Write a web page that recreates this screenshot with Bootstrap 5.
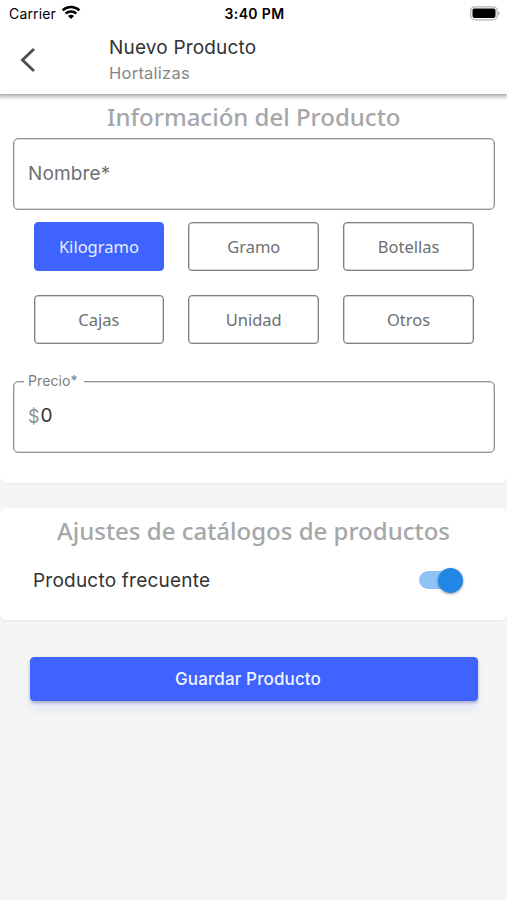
<!DOCTYPE html>
<html lang="es">
<head>
<meta charset="utf-8">
<meta name="viewport" content="width=device-width, initial-scale=1">
<title>Nuevo Producto</title>
<link href="https://cdn.jsdelivr.net/npm/bootstrap@5.3.0/dist/css/bootstrap.min.css" rel="stylesheet">
<style>
body{font-family:Inter,"Liberation Sans",sans-serif;background:#f5f5f5;color:#333;min-height:900px;overflow:hidden}
.top-area{height:94px;box-shadow:0 1px 5px 1px rgba(0,0,0,.42);z-index:2}
.status{height:28px;color:#000;display:grid;grid-template-columns:1fr auto 1fr;padding:0 7px 0 9px}
.carrier{font-size:14px;line-height:27px;letter-spacing:.15px;margin-top:-2px}
.wifi{margin:-3px 0 0 5px}
.battery{margin-top:-2px}
.clock{font-size:14px;line-height:27px;font-weight:600;letter-spacing:.35px}
.app-bar{height:66px;padding:6px 0 0 20px}
.back{margin-right:71px;margin-top:-8px}
.app-title{font-size:19px;line-height:28px;letter-spacing:.18px}
.app-sub{font-size:16.5px;line-height:23px;letter-spacing:.25px;color:#868686}
.panel{border-radius:6px;box-shadow:0 1px 2px rgba(0,0,0,.06)}
.panel-product{height:389px;padding:5px 12.5px 0 13px}
.panel-settings{height:112px;margin-top:25px;padding:5px 33px 0}
.section-title{font-family:"Noto Sans","Open Sans",sans-serif;font-weight:500;font-size:24px;line-height:36px;color:#a5a7a9;white-space:nowrap;text-align:center;margin:0}
.field{height:72px;border:1px solid #929292;box-shadow:inset 0 0 0 .5px #b5b5b5;border-radius:5px;padding:0 14px;font-size:19px}
.field-name{margin-top:3px;color:#707070;letter-spacing:.15px}
.field-price{margin-top:37px;padding-bottom:1px}
.currency{color:#8e8e8e;font-size:18px;margin-right:1px}
.float-label{left:10px;top:-10px;padding:0 6px 0 4px;background:#fff;color:#7d7d7d;font-size:14px;line-height:18px;letter-spacing:.1px}
.units{display:grid;grid-template-columns:repeat(3,1fr);gap:24px;padding:0 20.5px 0 20.5px;margin-top:12px}
.unit{--bs-btn-padding-y:0;--bs-btn-padding-x:0;--bs-btn-color:#6d7072;--bs-btn-border-color:#7d8080;--bs-btn-border-radius:4px;height:49px;font-family:"Noto Sans","Open Sans",sans-serif;font-size:16.5px;line-height:46px;box-shadow:inset 0 0 0 .5px #a5a8a8}
.unit.chosen{--bs-btn-bg:#3e63ff;--bs-btn-color:#e8edff;--bs-btn-border-color:#3e63ff;box-shadow:none}
.frequent{font-size:19px;line-height:28px;letter-spacing:.22px;height:62px}
.frequent-label{padding-top:2px}
.toggle-track{width:42px;height:18px;border-radius:9px;background:#8fc3f5;margin-right:13px}
.toggle-thumb{width:25px;height:25px;border-radius:50%;background:#2286e7;box-shadow:0 1px 3px rgba(0,0,0,.4);top:-3.5px;right:-2px}
.save{--bs-btn-bg:#3e63ff;--bs-btn-color:#f1f4ff;--bs-btn-border-color:#3e63ff;--bs-btn-border-radius:4px;width:448px;height:44px;margin:37px 0 0 30px;padding:2px 12px 0 0;font-size:17px;font-weight:500;letter-spacing:.13px;box-shadow:0 2px 3px rgba(60,70,130,.35),0 9px 8px rgba(62,99,255,.09)}
</style>
<script src="https://cdn.jsdelivr.net/npm/bootstrap@5.3.0/dist/js/bootstrap.bundle.min.js"></script>
</head>
<body>
<header class="top-area bg-white position-relative">
  <div class="status">
    <div class="d-flex align-items-center">
      <span class="carrier">Carrier</span>
      <svg class="wifi" width="20" height="15" viewBox="0 0 20 15" fill="none" stroke="#000" stroke-width="2.5" aria-hidden="true"><path d="M1.6 5.3C6.3.8 13.7.8 18.4 5.3M4.7 8.5c3-2.8 7.6-2.8 10.6 0"/><path d="M7 10.9c1.7-1.6 4.3-1.6 6 0l-3 3z" fill="#000" stroke="none"/></svg>
    </div>
    <span class="clock">3:40 PM</span>
    <div class="d-flex align-items-center justify-content-end">
      <svg class="battery" width="30" height="15" viewBox="0 0 30 15" aria-hidden="true"><rect x=".7" y=".8" width="26.5" height="13" rx="4" fill="#fff" stroke="#b4b4b4" stroke-width="1.3"/><rect x="2.5" y="2.6" width="23" height="9.4" rx="2" fill="#000"/><path d="M28.4 5.2c1.8.8 1.8 3.4 0 4.2z" fill="#a5a5a5"/></svg>
    </div>
  </div>
  <nav class="app-bar d-flex align-items-start">
    <svg class="back align-self-center" width="18" height="26" viewBox="0 0 18 26" fill="none" stroke="#4b5054" stroke-width="2.9" aria-hidden="true"><path d="M14 2 2.5 13 14 24"/></svg>
    <div>
      <div class="app-title">Nuevo Producto</div>
      <div class="app-sub">Hortalizas</div>
    </div>
  </nav>
</header>
<main>
  <section class="panel panel-product bg-white">
    <h1 class="section-title">Información del Producto</h1>
    <div class="field field-name d-flex align-items-center">Nombre*</div>
    <div class="units">
      <button class="btn unit chosen" type="button">Kilogramo</button>
      <button class="btn unit" type="button">Gramo</button>
      <button class="btn unit" type="button">Botellas</button>
      <button class="btn unit" type="button">Cajas</button>
      <button class="btn unit" type="button">Unidad</button>
      <button class="btn unit" type="button">Otros</button>
    </div>
    <div class="field field-price position-relative d-flex align-items-center">
      <span class="float-label position-absolute">Precio*</span>
      <span class="currency">$</span><span>0</span>
    </div>
  </section>
  <section class="panel panel-settings bg-white">
    <h2 class="section-title">Ajustes de catálogos de productos</h2>
    <div class="frequent d-flex align-items-center justify-content-between">
      <span class="frequent-label">Producto frecuente</span>
      <span class="toggle-track position-relative"><span class="toggle-thumb position-absolute"></span></span>
    </div>
  </section>
  <button class="btn save" type="button">Guardar Producto</button>
</main>
</body>
</html>
